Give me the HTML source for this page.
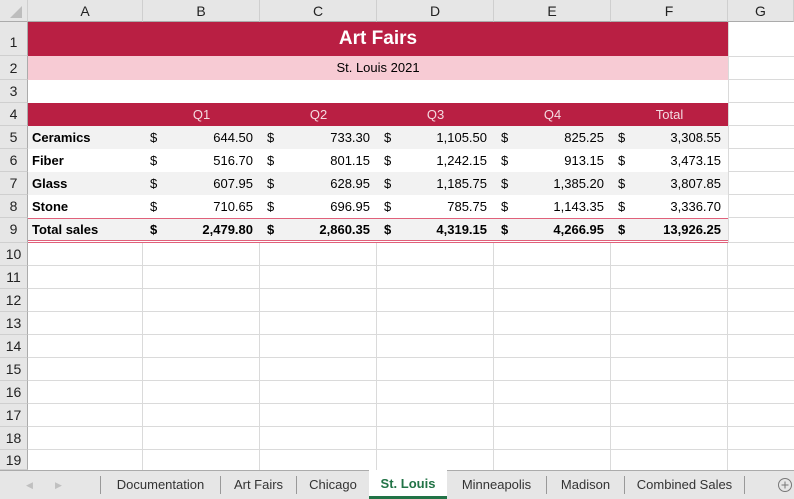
<!DOCTYPE html>
<html><head><meta charset="utf-8"><style>
*{margin:0;padding:0;box-sizing:border-box}
body{width:794px;height:499px;overflow:hidden;background:#fff;font-family:"Liberation Sans",sans-serif;position:relative}
.a{position:absolute}
.ch{top:0;height:22px;background:#e6e6e6;border-right:1px solid #cfcfcf;border-bottom:1px solid #ababab;font-size:14px;color:#222;text-align:center;line-height:22px}
.rh{left:0;width:28px;background:#e6e6e6;border-bottom:1px solid #cfcfcf;border-right:1px solid #ababab;font-size:14px;color:#222;text-align:center}
.vl{width:1px;background:#dadada;top:243px;height:227px}
.hl{height:1px;background:#dadada;left:28px;width:766px}
.row{left:28px;width:700px;font-size:13px;color:#000}
.c{position:absolute;top:0;height:100%;display:flex;align-items:center}
.tab{top:470px;height:29px;font-size:13px;color:#333;line-height:29px;text-align:center}
.sep{top:476px;width:1px;height:18px;background:#999}
</style></head><body>
<div class="a ch" style="left:0;width:28px"><svg width="28" height="22"><polygon points="22,6 22,18 10,18" fill="#bdbdbd"/></svg></div>
<div class="a ch" style="left:28px;width:115px">A</div>
<div class="a ch" style="left:143px;width:117px">B</div>
<div class="a ch" style="left:260px;width:117px">C</div>
<div class="a ch" style="left:377px;width:117px">D</div>
<div class="a ch" style="left:494px;width:117px">E</div>
<div class="a ch" style="left:611px;width:117px">F</div>
<div class="a ch" style="left:728px;width:66px">G</div>

<div class="a rh" style="top:22px;height:34px;line-height:40px">1</div>
<div class="a rh" style="top:56px;height:24px;line-height:24px">2</div>
<div class="a rh" style="top:80px;height:23px;line-height:23px">3</div>
<div class="a rh" style="top:103px;height:23px;line-height:23px">4</div>
<div class="a rh" style="top:126px;height:23px;line-height:23px">5</div>
<div class="a rh" style="top:149px;height:23px;line-height:23px">6</div>
<div class="a rh" style="top:172px;height:23px;line-height:23px">7</div>
<div class="a rh" style="top:195px;height:23px;line-height:23px">8</div>
<div class="a rh" style="top:218px;height:25px;line-height:23px">9</div>
<div class="a rh" style="top:243px;height:23px;line-height:23px">10</div>
<div class="a rh" style="top:266px;height:23px;line-height:23px">11</div>
<div class="a rh" style="top:289px;height:23px;line-height:23px">12</div>
<div class="a rh" style="top:312px;height:23px;line-height:23px">13</div>
<div class="a rh" style="top:335px;height:23px;line-height:23px">14</div>
<div class="a rh" style="top:358px;height:23px;line-height:23px">15</div>
<div class="a rh" style="top:381px;height:23px;line-height:23px">16</div>
<div class="a rh" style="top:404px;height:23px;line-height:23px">17</div>
<div class="a rh" style="top:427px;height:23px;line-height:23px">18</div>
<div class="a rh" style="top:450px;height:20px;line-height:20px">19</div>

<div class="a" style="left:728px;top:22px;width:1px;height:221px;background:#dadada"></div>
<div class="a hl" style="top:56px;left:728px;width:66px"></div>
<div class="a hl" style="top:79px;left:728px;width:66px"></div>
<div class="a hl" style="top:102px;left:728px;width:66px"></div>
<div class="a hl" style="top:125px;left:728px;width:66px"></div>
<div class="a hl" style="top:148px;left:728px;width:66px"></div>
<div class="a hl" style="top:171px;left:728px;width:66px"></div>
<div class="a hl" style="top:194px;left:728px;width:66px"></div>
<div class="a hl" style="top:217px;left:728px;width:66px"></div>
<div class="a hl" style="top:242px;left:728px;width:66px"></div>

<div class="a vl" style="left:142px"></div><div class="a vl" style="left:259px"></div><div class="a vl" style="left:376px"></div><div class="a vl" style="left:493px"></div><div class="a vl" style="left:610px"></div><div class="a vl" style="left:727px"></div>
<div class="a hl" style="top:265px"></div><div class="a hl" style="top:288px"></div><div class="a hl" style="top:311px"></div><div class="a hl" style="top:334px"></div><div class="a hl" style="top:357px"></div><div class="a hl" style="top:380px"></div><div class="a hl" style="top:403px"></div><div class="a hl" style="top:426px"></div><div class="a hl" style="top:449px"></div>

<div class="a" style="left:28px;top:22px;width:700px;height:34px;background:#b91f43;color:#fff;font-weight:bold;font-size:19px;text-align:center;line-height:34px">Art Fairs</div>
<div class="a" style="left:28px;top:56px;width:700px;height:24px;background:#f7cbd4;color:#000;font-size:13px;text-align:center;line-height:24px">St. Louis 2021</div>
<div class="a" style="left:28px;top:103px;width:700px;height:23px;background:#b91f43;color:#f4dbe1;font-size:13px;line-height:23px">
<span class="a" style="left:115px;width:117px;text-align:center">Q1</span>
<span class="a" style="left:232px;width:117px;text-align:center">Q2</span>
<span class="a" style="left:349px;width:117px;text-align:center">Q3</span>
<span class="a" style="left:466px;width:117px;text-align:center">Q4</span>
<span class="a" style="left:583px;width:117px;text-align:center">Total</span>
</div>

<div id="rows"></div>
<script>
var d=[["Ceramics","644.50","733.30","1,105.50","825.25","3,308.55",126,"#f2f2f2"],
["Fiber","516.70","801.15","1,242.15","913.15","3,473.15",149,"#fff"],
["Glass","607.95","628.95","1,185.75","1,385.20","3,807.85",172,"#f2f2f2"],
["Stone","710.65","696.95","785.75","1,143.35","3,336.70",195,"#fff"],
["Total sales","2,479.80","2,860.35","4,319.15","4,266.95","13,926.25",218,"#f2f2f2"]];
var h="";
d.forEach(function(r,i){
 var t=i==4;
 h+='<div class="a row" style="top:'+r[6]+'px;height:23px;background:'+r[7]+';'+(t?'font-weight:bold;':'')+'">';
 h+='<span class="c" style="left:4px;font-weight:bold">'+r[0]+'</span>';
 for(var k=1;k<=5;k++){var x=115+(k-1)*117;
  h+='<span class="c" style="left:'+(x+7)+'px">$</span><span class="c" style="left:'+x+'px;width:110px;justify-content:flex-end">'+r[k]+'</span>';}
 h+='</div>';});
document.getElementById("rows").outerHTML=h;
</script>
<div class="a" style="left:28px;top:218px;width:700px;height:1px;background:#e0607a"></div>
<div class="a" style="left:28px;top:240px;width:700px;height:1px;background:#e0607a"></div>
<div class="a" style="left:28px;top:242px;width:700px;height:1px;background:#e0607a"></div>

<div class="a" style="left:0;top:470px;width:794px;height:29px;background:#e6e6e6;border-top:1px solid #ababab"></div>
<div class="a" style="left:26px;top:480px;color:#c0c0c0;font-size:9px">&#9664;</div>
<div class="a" style="left:55px;top:480px;color:#c0c0c0;font-size:9px">&#9654;</div>
<div class="a sep" style="left:100px"></div>
<div class="a tab" style="left:101px;width:119px">Documentation</div>
<div class="a sep" style="left:220px"></div>
<div class="a tab" style="left:221px;width:75px">Art Fairs</div>
<div class="a sep" style="left:296px"></div>
<div class="a tab" style="left:297px;width:72px">Chicago</div>
<div class="a tab" style="left:369px;width:78px;top:470px;background:#fff;color:#217346;font-weight:bold;border-bottom:3px solid #217346;line-height:28px">St. Louis</div>
<div class="a tab" style="left:447px;width:99px">Minneapolis</div>
<div class="a sep" style="left:546px"></div>
<div class="a tab" style="left:547px;width:77px">Madison</div>
<div class="a sep" style="left:624px"></div>
<div class="a tab" style="left:625px;width:119px">Combined Sales</div>
<div class="a sep" style="left:744px"></div>
<svg class="a" style="left:777px;top:477px" width="16" height="16"><circle cx="8" cy="8" r="6.5" fill="none" stroke="#777" stroke-width="1"/><path d="M8 4.5V11.5M4.5 8H11.5" stroke="#777" stroke-width="1"/></svg>
</body></html>
